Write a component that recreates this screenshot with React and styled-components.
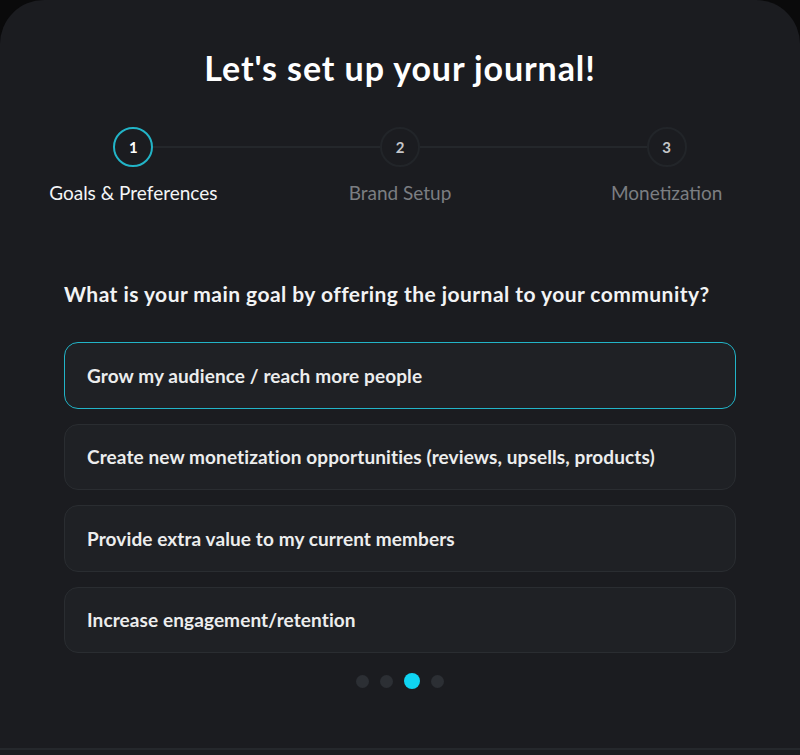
import React, { useState } from 'react'
import styled, { createGlobalStyle } from 'styled-components'

const GlobalStyle = createGlobalStyle`
  html, body {
    margin: 0;
    padding: 0;
    background: #0a0a0b;
  }
  * {
    box-sizing: border-box;
  }
  body {
    font-family: Lato, "Noto Sans", sans-serif;
    -webkit-font-smoothing: antialiased;
  }
`

const Card = styled.div`
  width: 800px;
  min-height: 755px;
  background: #1b1c20;
  border-radius: 44px 44px 0 0;
  padding-top: 47px;
  display: flex;
  flex-direction: column;
`

const Title = styled.h1`
  margin: 0;
  text-align: center;
  color: #ffffff;
  font-size: 34px;
  line-height: 42px;
  font-weight: 700;
  letter-spacing: 0.9px;
`

const Stepper = styled.div`
  display: grid;
  grid-template-columns: repeat(3, 1fr);
  margin-top: 38px;
`

const Step = styled.div`
  display: flex;
  flex-direction: column;
  align-items: center;
`

const StepTrack = styled.div`
  width: 100%;
  display: flex;
  align-items: center;
`

const Connector = styled.div`
  flex: 1;
  height: 2px;
  background: ${({ $blank }) => ($blank ? 'transparent' : '#24272b')};
`

const Circle = styled.div`
  width: 40px;
  height: 40px;
  flex-shrink: 0;
  border-radius: 50%;
  border: 2px solid ${({ $active }) => ($active ? '#22b4c7' : '#222529')};
  display: flex;
  align-items: center;
  justify-content: center;
  color: ${({ $active }) => ($active ? '#ffffff' : '#c4c6c9')};
  font-size: 15px;
  font-weight: 700;
`

const StepLabel = styled.div`
  margin-top: 14px;
  font-size: 19px;
  line-height: 24px;
  color: ${({ $active }) => ($active ? '#f4f5f6' : '#7b7e82')};
`

const Body = styled.div`
  padding: 0 64px;
  margin-top: 75px;
`

const Question = styled.h2`
  margin: 0;
  color: #f2f3f4;
  font-size: 21px;
  line-height: 28px;
  font-weight: 700;
  letter-spacing: 0.45px;
`

const Options = styled.div`
  margin-top: 34px;
  display: flex;
  flex-direction: column;
  gap: 15px;
`

const Option = styled.button`
  height: 66.5px;
  width: 100%;
  padding: 0 22px;
  display: flex;
  align-items: center;
  text-align: left;
  border-radius: 14px;
  background: #1f2125;
  border: 1.5px solid ${({ $selected }) => ($selected ? '#22b4c7' : '#2a2d31')};
  color: #eceded;
  font-family: inherit;
  font-size: 19px;
  font-weight: 700;
  letter-spacing: 0.1px;
  cursor: pointer;
`

const Dots = styled.div`
  margin-top: 20px;
  display: flex;
  align-items: center;
  justify-content: center;
  gap: 11px;
`

const Dot = styled.span`
  width: ${({ $active }) => ($active ? 16 : 13)}px;
  height: ${({ $active }) => ($active ? 16 : 13)}px;
  border-radius: 50%;
  background: ${({ $active }) => ($active ? '#0fd4f2' : '#2c2f34')};
`

const Footer = styled.div`
  margin-top: auto;
  height: 7px;
  border-top: 2px solid #25282c;
`

const steps = ['Goals & Preferences', 'Brand Setup', 'Monetization']

const goals = [
  'Grow my audience / reach more people',
  'Create new monetization opportunities (reviews, upsells, products)',
  'Provide extra value to my current members',
  'Increase engagement/retention',
]

const App = () => {
  const [selected, setSelected] = useState(0)
  return (
    <>
      <GlobalStyle />
      <Card>
        <Title>Let's set up your journal!</Title>
        <Stepper>
          {steps.map((label, i) => (
            <Step key={label}>
              <StepTrack>
                <Connector $blank={i === 0} />
                <Circle $active={i === 0}>{i + 1}</Circle>
                <Connector $blank={i === steps.length - 1} />
              </StepTrack>
              <StepLabel $active={i === 0}>{label}</StepLabel>
            </Step>
          ))}
        </Stepper>
        <Body>
          <Question>
            What is your main goal by offering the journal to your community?
          </Question>
          <Options>
            {goals.map((goal, i) => (
              <Option
                key={goal}
                $selected={selected === i}
                onClick={() => setSelected(i)}
              >
                {goal}
              </Option>
            ))}
          </Options>
          <Dots>
            {[0, 1, 2, 3].map((d) => (
              <Dot key={d} $active={d === 2} />
            ))}
          </Dots>
        </Body>
        <Footer />
      </Card>
    </>
  )
}

export default App
